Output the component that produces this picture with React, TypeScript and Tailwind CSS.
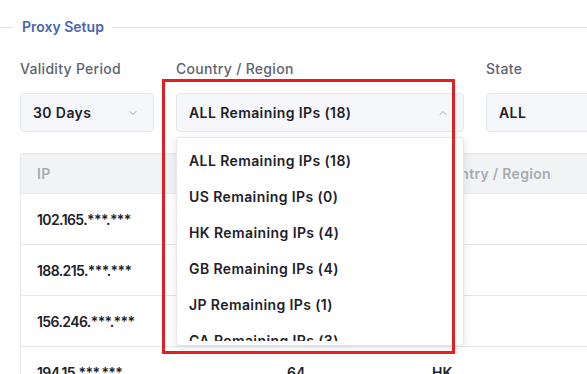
import React from 'react';
import { ChevronDown, ChevronUp } from 'lucide-react';

const options = [
  'ALL Remaining IPs (18)',
  'US Remaining IPs (0)',
  'HK Remaining IPs (4)',
  'GB Remaining IPs (4)',
  'JP Remaining IPs (1)',
  'CA Remaining IPs (3)',
  'DE Remaining IPs (2)',
];

const rows = [
  { ip: '102.165.***.***', port: '64', region: 'US' },
  { ip: '188.215.***.***', port: '64', region: 'GB' },
  { ip: '156.246.***.***', port: '64', region: 'JP' },
  { ip: '194.15.***.***', port: '64', region: 'HK' },
];

const SelectBox: React.FC<{ value: string; open?: boolean; width: string }> = ({ value, open, width }) => (
  <div
    className={`${width} h-[39px] flex items-center justify-between pl-3 pr-[14px] bg-[#f5f7fa] border border-[#e4e7ed] rounded-[4px]`}
  >
    <span className="text-[14px] font-semibold tracking-[0.4px] text-[#1d2129]">{value}</span>
    {open ? (
      <ChevronUp className="w-[12px] h-[12px] text-[#8a8f99]" strokeWidth={1.5} />
    ) : (
      <ChevronDown className="w-[12px] h-[12px] text-[#8a8f99]" strokeWidth={1.5} />
    )}
  </div>
);

const App: React.FC = () => {
  return (
    <div className="relative w-[587px] h-[374px] overflow-hidden bg-white font-['Inter',sans-serif]">
      {/* fieldset legend */}
      <div className="flex items-center pt-[18px]">
        <div className="w-[14px] h-px bg-[#e4e7ed]" />
        <span className="px-2 text-[14px] font-semibold text-[#4a66ad] leading-[18px]">Proxy Setup</span>
        <div className="flex-1 h-px bg-[#e4e7ed]" />
      </div>

      {/* filters */}
      <div className="flex gap-[22px] px-5 mt-[23px]">
        <div className="flex flex-col gap-[14px]">
          <span className="text-[14px] leading-5 font-medium tracking-[0.3px] text-[#5c6370]">Validity Period</span>
          <SelectBox value="30 Days" width="w-[134px]" />
        </div>
        <div className="relative flex flex-col gap-[14px]">
          <span className="text-[14px] leading-5 font-medium tracking-[0.3px] text-[#5c6370]">Country / Region</span>
          <SelectBox value="ALL Remaining IPs (18)" width="w-[288px]" open />
          <div className="absolute left-0 top-[78px] z-10 w-[288px] py-1 bg-white border border-[#e4e7ed] rounded-[4px] shadow-[0_2px_10px_rgba(0,0,0,0.1)]">
            <div className="h-[199px] overflow-hidden">
              {options.map((o) => (
                <div key={o} className="h-9 flex items-center px-3 text-[14px] font-semibold tracking-[0.4px] text-[#1d2129]">
                  {o}
                </div>
              ))}
            </div>
          </div>
        </div>
        <div className="flex flex-col gap-[14px]">
          <span className="text-[14px] leading-5 font-medium tracking-[0.3px] text-[#5c6370]">State</span>
          <SelectBox value="ALL" width="w-[200px]" />
        </div>
      </div>

      {/* table */}
      <div className="ml-5 mt-[21px] w-[700px] border-l border-t border-[#e4e7ed] rounded-tl-[4px]">
        <div className="flex h-[40px] items-center bg-[#f2f3f5] border-b border-[#e4e7ed] text-[14px] font-semibold tracking-[0.3px] text-[#a8abb2]">
          <div className="w-[250px] pl-4">IP</div>
          <div className="w-[145px] pl-4">Port</div>
          <div className="flex-1 pl-4">Country / Region</div>
        </div>
        {rows.map((r) => (
          <div key={r.ip} className="flex h-[51px] items-center border-b border-[#e4e7ed] text-[14px] font-semibold text-[#1d2129]">
            <div className="w-[250px] pl-4 tracking-[-0.6px]">{r.ip}</div>
            <div className="w-[145px] pl-4">{r.port}</div>
            <div className="flex-1 pl-4">{r.region}</div>
          </div>
        ))}
      </div>

      {/* annotation box */}
      <div className="absolute left-[162px] top-[79px] w-[293px] h-[275px] border-[3px] border-[#e3201f] z-20 pointer-events-none" />
    </div>
  );
};

export default App;
